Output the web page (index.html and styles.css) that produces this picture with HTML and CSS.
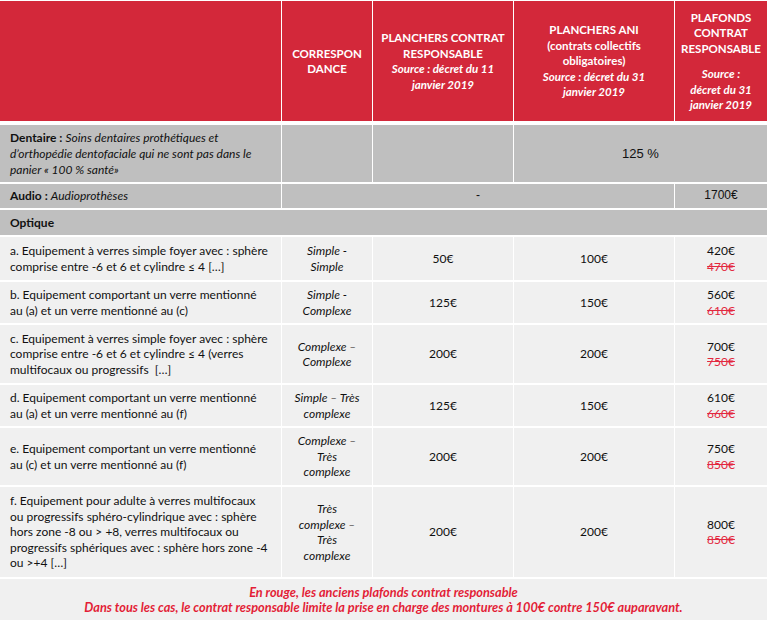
FILE: index.html
```html
<!DOCTYPE html>
<html lang="fr">
<head>
<meta charset="utf-8">
<title>Plafonds et planchers</title>
<link rel="stylesheet" href="styles.css">
</head>
<body>
<div class="table">
  <div class="cell head"></div>
  <div class="cell head"><div>CORRESPON<br>DANCE</div></div>
  <div class="cell head"><div>PLANCHERS CONTRAT<br>RESPONSABLE<br><em>Source : décret du 11<br>janvier 2019</em></div></div>
  <div class="cell head"><div>PLANCHERS ANI<br>(contrats collectifs<br>obligatoires)<br><em>Source : décret du 31<br>janvier 2019</em></div></div>
  <div class="cell head"><div>PLAFONDS<br>CONTRAT<br>RESPONSABLE<em class="gap">Source :<br>décret du 31<br>janvier 2019</em></div></div>

  <div class="cell grey label"><div><b>Dentaire :</b> <i>Soins dentaires prothétiques et<br>d’orthopédie dentofaciale qui ne sont pas dans le<br>panier « 100 % santé»</i></div></div>
  <div class="cell grey"></div>
  <div class="cell grey"></div>
  <div class="cell grey arial big span2">125 %</div>

  <div class="cell grey label"><div><b>Audio :</b> <i>Audioprothèses</i></div></div>
  <div class="cell grey arial span3">-</div>
  <div class="cell grey arial">1700€</div>

  <div class="cell grey label span5"><b>Optique</b></div>

  <div class="cell light label"><div>a. Equipement à verres simple foyer avec : sphère<br>comprise entre -6 et 6 et cylindre ≤ 4 […]</div></div>
  <div class="cell light"><i>Simple -<br>Simple</i></div>
  <div class="cell light">50€</div>
  <div class="cell light">100€</div>
  <div class="cell light"><div>420€<br><s>470€</s></div></div>

  <div class="cell light label"><div>b. Equipement comportant un verre mentionné<br>au (a) et un verre mentionné au (c)</div></div>
  <div class="cell light"><i>Simple -<br>Complexe</i></div>
  <div class="cell light">125€</div>
  <div class="cell light">150€</div>
  <div class="cell light"><div>560€<br><s>610€</s></div></div>

  <div class="cell light label"><div>c. Equipement à verres simple foyer avec : sphère<br>comprise entre -6 et 6 et cylindre ≤ 4 (verres<br>multifocaux ou progressifs &nbsp;[…]</div></div>
  <div class="cell light"><i>Complexe –<br>Complexe</i></div>
  <div class="cell light">200€</div>
  <div class="cell light">200€</div>
  <div class="cell light"><div>700€<br><s>750€</s></div></div>

  <div class="cell light label"><div>d. Equipement comportant un verre mentionné<br>au (a) et un verre mentionné au (f)</div></div>
  <div class="cell light"><i>Simple – Très<br>complexe</i></div>
  <div class="cell light">125€</div>
  <div class="cell light">150€</div>
  <div class="cell light"><div>610€<br><s>660€</s></div></div>

  <div class="cell light label"><div>e. Equipement comportant un verre mentionné<br>au (c) et un verre mentionné au (f)</div></div>
  <div class="cell light"><i>Complexe –<br>Très<br>complexe</i></div>
  <div class="cell light">200€</div>
  <div class="cell light">200€</div>
  <div class="cell light"><div>750€<br><s>850€</s></div></div>

  <div class="cell light label"><div>f. Equipement pour adulte à verres multifocaux<br>ou progressifs sphéro-cylindrique avec : sphère<br>hors zone -8 ou &gt; +8, verres multifocaux ou<br>progressifs sphériques avec : sphère hors zone -4<br>ou &gt;+4 […]</div></div>
  <div class="cell light"><i>Très<br>complexe –<br>Très<br>complexe</i></div>
  <div class="cell light">200€</div>
  <div class="cell light">200€</div>
  <div class="cell light"><div>800€<br><s>850€</s></div></div>

  <div class="cell light note span5"><div>En rouge, les anciens plafonds contrat responsable<br>Dans tous les cas, le contrat responsable limite la prise en charge des montures à 100€ contre 150€ auparavant.</div></div>
</div>
</body>
</html>
```

FILE: styles.css
```css
html, body {
  margin: 0;
  padding: 0;
  background: #ffffff;
}

body {
  font-family: Lato, "Open Sans", sans-serif;
  font-size: 12px;
  color: #111111;
}

.table {
  width: 767px;
  padding-top: 1px;
  display: grid;
  grid-template-columns: 281px 90px 140px 160px 92px;
  grid-template-rows: 122px 57px 24px 25px 43px 41px 58px 41px 57px 90px 41px;
  column-gap: 1px;
  row-gap: 2px;
  background: #ffffff;
}

.cell {
  display: flex;
  align-items: center;
  justify-content: center;
  text-align: center;
  line-height: 15.5px;
  overflow: hidden;
}

.head {
  background: #d3283a;
  color: #ffffff;
  font-weight: 700;
  font-size: 11.5px;
  border-bottom: 2px solid #ffffff;
}

.head em {
  font-style: italic;
}

.head .gap {
  display: block;
  margin-top: 10px;
}

.grey {
  background: #bfbfbf;
}

.light {
  background: #f0f0f0;
}

.label {
  justify-content: flex-start;
  text-align: left;
  padding-left: 10px;
  line-height: 16px;
}

.light.label {
  line-height: 15.5px;
}

.arial {
  font-family: "Liberation Sans", Arial, sans-serif;
  font-size: 12px;
}

.big {
  font-size: 13px;
}

.span2 { grid-column: span 2; }
.span3 { grid-column: span 3; }
.span5 { grid-column: span 5; }

s {
  color: #e3283f;
}

.note {
  color: #e31e37;
  font-weight: 700;
  font-style: italic;
  font-size: 12.75px;
  line-height: 15px;
}
```
